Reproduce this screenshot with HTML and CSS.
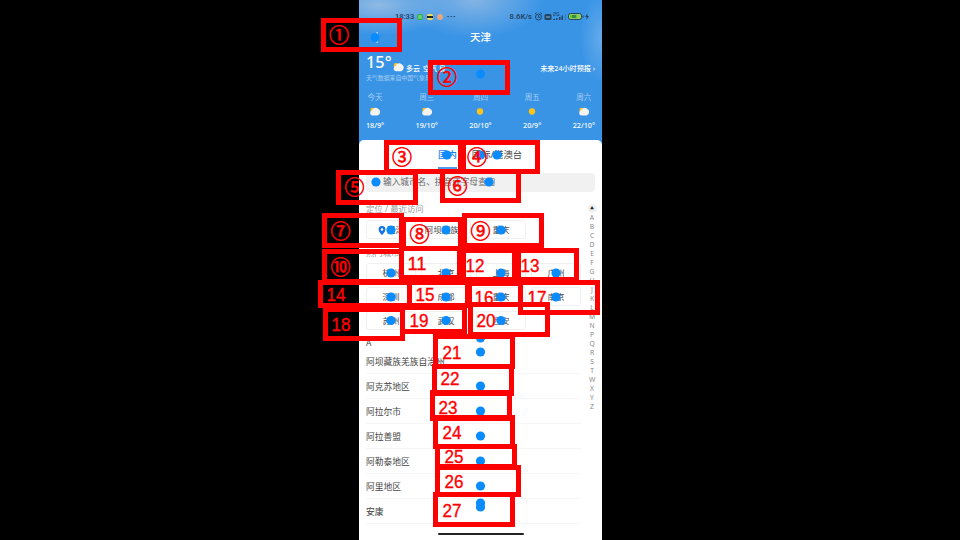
FILE: index.html
```
<!DOCTYPE html>
<html lang="zh-CN">
<head>
<meta charset="utf-8">
<title>天津</title>
<link rel="stylesheet" href="styles.css">
</head>
<body>
<main class="stage">
<div class="phone">
  <header class="weather">
    <div class="status">
      <span class="clock">18:33</span><i class="app green"></i><i class="app yellow"></i><i class="app orange"></i><span class="more">•••</span>
      <div class="status-right"><span>8.6K/s</span>
        <svg width="9" height="9" viewBox="0 0 9 9" fill="none" stroke="#24445f"><circle cx="4.5" cy="5" r="3"/><path d="M1 2l1.5-1.2M8 2L6.500 .8M4.500 3.300v2h1.500"/></svg>
        <svg width="8" height="8" viewBox="0 0 8 8"><rect x=".5" y="1" width="7" height="6" rx="1.500" fill="#24445f"/><path d="M2 4h4" stroke="#8ab9e0"/></svg>
        <svg width="14" height="9" viewBox="0 0 14 9" fill="#24445f"><path d="M0 7h2v1H0zM3 6h1.500v2H3zM6 5h1.500v3H6zM8.500 3.500H10V8H8.500z"/><path d="M.5 .5h2v1.500h-2v1.500h2M6 .5H3.800v3H6V2.200H5" fill="none" stroke="#24445f" stroke-width=".6"/><path d="M12 2h1v6h-1z" opacity=".35"/></svg>
        <svg width="23" height="9" viewBox="0 0 23 9"><rect x=".5" y="1.500" width="13" height="6" rx="2" fill="#8ecb63" stroke="#24445f"/><path d="M2 3h7v3H2z" fill="#55ce2a"/><path d="M5 3v3M7 3v3M15 3.500v2" stroke="#24445f"/><path d="M19.500 1.500L17 5h1.800l-.5 3 2.700-4h-1.700z" fill="#24445f"/></svg>
      </div>
    </div>
    <h1>天津</h1>
    <div class="current">
      <div><div class="now"><span class="temp">15°</span><svg class="cloud" viewBox="0 0 12 10"><use href="#cloud"/></svg><b>多云</b><b>空气 良</b></div>
      <div class="source">天气数据来自中国气象局</div></div>
      <div class="hourly">未来24小时预报 <span>›</span></div>
    </div>
    <div class="forecast">
      <div><span>今天</span><svg viewBox="0 0 12 10"><g id="cloud"><circle cx="3.400" cy="3.300" r="2.600" fill="#ffc423"/><path d="M3.300 9.500a2.800 2.800 0 0 1-.6-5.500A4 4 0 0 1 9.300 2a4 4 0 0 1-.4 7.500z" fill="#f4f3ef"/></g></svg><b>18/9°</b></div>
      <div><span>周三</span><svg viewBox="0 0 12 10"><use href="#cloud"/></svg><b>19/10°</b></div>
      <div><span>周四</span><svg viewBox="0 0 12 10"><circle cx="6" cy="5" r="3.500" fill="#ffc414"/></svg><b>20/10°</b></div>
      <div><span>周五</span><svg viewBox="0 0 12 10"><circle cx="6" cy="5" r="3.500" fill="#ffc414"/></svg><b>20/9°</b></div>
      <div><span>周六</span><svg viewBox="0 0 12 10"><use href="#cloud"/></svg><b>22/10°</b></div>
    </div>
  </header>
  <section class="sheet">
    <nav class="tabs"><span class="active">国内</span><span>国际/港澳台</span></nav>
    <div class="search">输入城市名、拼音或字母查询</div>
    <div class="content">
      <div class="places">
        <h2>定位 / 最近访问</h2>
        <div class="chips recent"><span><svg class="pin" viewBox="0 0 8 9"><path fill="#1673e8" fill-rule="evenodd" d="M4 0a3.400 3.400 0 0 0-3.400 3.400C.6 5.800 4 9 4 9s3.400-3.200 3.400-5.600A3.400 3.400 0 0 0 4 0zm0 2.200a1.300 1.300 0 1 1 0 2.600 1.300 1.300 0 0 1 0-2.600z"/></svg>天津</span><span class="long">阿坝藏族羌</span><span>重庆</span></div>
        <h2 class="hot">热门城市</h2>
        <div class="chips"><span>杭州</span><span>北京</span><span>上海</span><span>广州</span><span>深圳</span><span>成都</span><span>重庆</span><span>南京</span><span>苏州</span><span>武汉</span><span>西安</span></div>
        <h3>A</h3>
        <ul><li>阿坝藏族羌族自治州</li><li>阿克苏地区</li><li>阿拉尔市</li><li>阿拉善盟</li><li>阿勒泰地区</li><li>阿里地区</li><li>安康</li></ul>
      </div>
      <div class="letters"><span class="top">▲</span><span>A</span><span>B</span><span>C</span><span>D</span><span>E</span><span>F</span><span>G</span><span>H</span><span>J</span><span>K</span><span>L</span><span>M</span><span>N</span><span>P</span><span>Q</span><span>R</span><span>S</span><span>T</span><span>W</span><span>X</span><span>Y</span><span>Z</span></div>
    </div>
    <div class="home"></div>
  </section>
</div>
<svg class="marks" viewBox="0 0 960 540" width="960" height="540"></svg>
</main>
<script src="marks.js"></script>
</body>
</html>
```
FILE: styles.css
```
* { box-sizing: border-box; }
body { margin: 0; background: #000; font-family: "Noto Sans", "Noto Sans CJK SC", sans-serif; }
.stage { position: relative; width: 960px; height: 540px; overflow: hidden; }
.phone { width: 243px; height: 540px; margin-left: 359px; background: #3994e6; overflow: hidden; }
.weather { height: 140px; color: #fff; background: radial-gradient(ellipse 75px 30px at 20px 5px, #8fb9e4, transparent), radial-gradient(ellipse 70px 38px at 115px 0, #84b4e4, transparent), radial-gradient(ellipse 22px 45px at 243px 38px, #65abea, transparent), #3994e6; }
.status { height: 27px; padding: 6px 11px 0 36px; display: flex; align-items: center; gap: 4px; color: #24445f; font: 600 7.5px Roboto, sans-serif; }
.clock { width: 18px; }
.app { width: 6px; height: 6px; border-radius: 2px; flex: none; }
.green { background: #65cf72; border: 1px solid #33a947; }
.yellow { background: linear-gradient(#f1df55 30%, #222 30% 60%, #f1df55 60%); }
.orange { background: #e4a57f; border-radius: 50%; }
.more { font-size: 6px; letter-spacing: 1px; }
.status-right { display: flex; align-items: center; gap: 1px; margin-left: auto; font-size: 7.6px; }
.status-right > span { margin-right: 1px; }
.status-right svg { flex: none; }
h1 { margin: 0; height: 22px; font-size: 10.5px; line-height: 21px; font-weight: 500; text-align: center; }
.current { height: 42px; padding: 4px 7px 0; display: flex; justify-content: space-between; white-space: nowrap; }
.now { height: 21px; display: flex; align-items: flex-end; gap: 3px; }
.temp { width: 24px; font-size: 16.3px; line-height: 23px; font-weight: 500; }
.now b { font-size: 7px; line-height: 11px; font-weight: 500; }
.now svg + b { margin-left: -1px; }
.cloud { width: 11px; height: 10px; margin-bottom: 2px; }
.source { font-size: 5.9px; line-height: 9px; color: #a7cdf1; }
.hourly { padding-top: 10px; font-size: 7.1px; line-height: 10px; font-weight: 500; }
.forecast { display: flex; justify-content: space-between; padding: 0 7px; }
.forecast div { display: flex; flex-direction: column; align-items: center; }
.forecast span { font-size: 7.5px; line-height: 12px; color: #a7cdf1; }
.forecast svg { width: 12px; height: 9px; margin: 4px 0; }
.forecast b { font: 500 7.2px/11px "Noto Sans", sans-serif; }
.sheet { height: 400px; background: #fff; border-radius: 5px 5px 0 0; color: #454545; }
.tabs { display: flex; gap: 15px; padding-left: 79px; height: 33px; font-size: 9.4px; line-height: 29px; }
.active { color: #207fe9; font-weight: 500; border-bottom: 2px solid #4f98eb; height: 29px; }
.search { margin: 0 7px; height: 19px; background: #f1f1f1; border-radius: 4px; padding-left: 17px; font-size: 8.65px; line-height: 19px; color: #666; }
.content { display: flex; height: 342px; }
.places { width: 215px; margin-left: 7px; flex: none; }
h2 { margin: 0; padding-top: 11px; height: 28px; font-size: 8.4px; line-height: 12px; font-weight: 400; color: #999; }
.hot { padding-top: 8px; height: 24px; }
.chips { display: grid; grid-template-columns: repeat(4, 50px); gap: 5px; }
.chips span { height: 19px; border: 1px solid #f0f0f0; border-radius: 3px; font-size: 8.5px; line-height: 18px; text-align: center; white-space: nowrap; }
.pin { width: 8px; height: 9px; vertical-align: middle; margin-right: 1px; }
h3 { margin: 0; height: 19px; padding-top: 7px; font-size: 8.4px; line-height: 11px; font-weight: 400; }
ul { list-style: none; margin: 0; padding: 0; }
li { height: 25px; font-size: 8.75px; line-height: 27px; border-bottom: 1px solid #f6f6f6; white-space: nowrap; }
.letters { width: 9px; margin-left: 6.5px; padding-top: 12px; display: flex; flex-direction: column; text-align: center; font-size: 6.7px; color: #888; }
.letters span { height: 9px; line-height: 9px; flex: none; }
.letters .top { font-size: 4px; background: #f1f1f1; border-radius: 50%; color: #222; }
.home { width: 86px; height: 2px; margin: -1px auto 0; background: #222; border-radius: 1px; }
.marks { position: absolute; inset: 0; }
.box { fill: none; stroke: #f00; stroke-width: 5; }
.dot { fill: #0a8cff; }
.tick { stroke: #e4f1fd; stroke-width: 1; }
.number { fill: #f00; stroke: #f00; stroke-width: .35; font: 18px "Liberation Sans", sans-serif; }
.number.circled { font: 20px "Noto Sans CJK SC", sans-serif; stroke-width: .6; }
```
FILE: marks.js
```
const boxes = [
  [321,18,402,52],[428,60,510,95],[384,140,463,174],[461,140,540,174],
  [336,170,418,205],[440,169,521,203],[322,213,404,248],[401,217,463,251],
  [462,213,544,248],[322,249,404,284],[399,246,462,280],[461,248,517,282],
  [516,248,579,282],[318,280,412,308],[407,280,470,308],[467,281,523,307],
  [518,280,600,315],[323,307,405,341],[400,305,467,334],[468,302,550,337],
  [433,334,515,369],[432,364,514,396],[430,390,512,421],[433,415,515,449],
  [435,444,517,469],[435,465,521,497],[433,492,515,527]
];
const labels = [
  [329,42.5],[437,85],[392,164.5],[467,164.5],[344.5,195],[447.5,194],[330.5,238.5],[409.5,241.5],
  [470.5,238.5],[330.5,274.5],[408,270],[466,272],[521,272],[327,301],[416,300.5],[475,304],
  [528,304],[332,331],[410,327],[477,326.500],[443,359],[441,385],[439,413.5],[443,439],
  [445,463],[445,488],[443,516.500]
];
const dots = [
  [375,37.500],[480.500,74],[447,155],[480.500,155],[497,155],[376,182],[489,182],
  [391,230],[446,230],[501,230],[391,273],[446,273],[501,273],[556,273],
  [391,297],[446,297],[501,297],[556,297],[391,320.500],[446,320.500],[501,320.500],
  [480.500,338],[480.500,352],[480.500,386],[480.500,411],[480.500,436],
  [480.500,461],[480.500,486],[480.500,503],[480.500,507]
];
const svg = document.querySelector('.marks');
function add(tag, attrs, text) {
  const el = document.createElementNS('http://www.w3.org/2000/svg', tag);
  for (const key in attrs) el.setAttribute(key, attrs[key]);
  if (text) el.textContent = text;
  svg.appendChild(el);
}
add('path', {class: 'tick', d: 'M377 32v11'});
dots.forEach(([cx, cy]) => add('circle', {class: 'dot', cx, cy, r: 4.6}));
boxes.forEach(([x1, y1, x2, y2]) => add('rect', {class: 'box', x: x1 + 2.5, y: y1 + 2.5, width: x2 - x1 - 5, height: y2 - y1 - 5}));
labels.forEach(([x, y], i) => {
  if (i < 10) add('text', {class: 'number circled', x, y}, '①②③④⑤⑥⑦⑧⑨⑩'[i]);
  else add('text', {class: 'number', x: x - .5, y, textLength: 19, lengthAdjust: 'spacingAndGlyphs'}, String(i + 1));
});
```
